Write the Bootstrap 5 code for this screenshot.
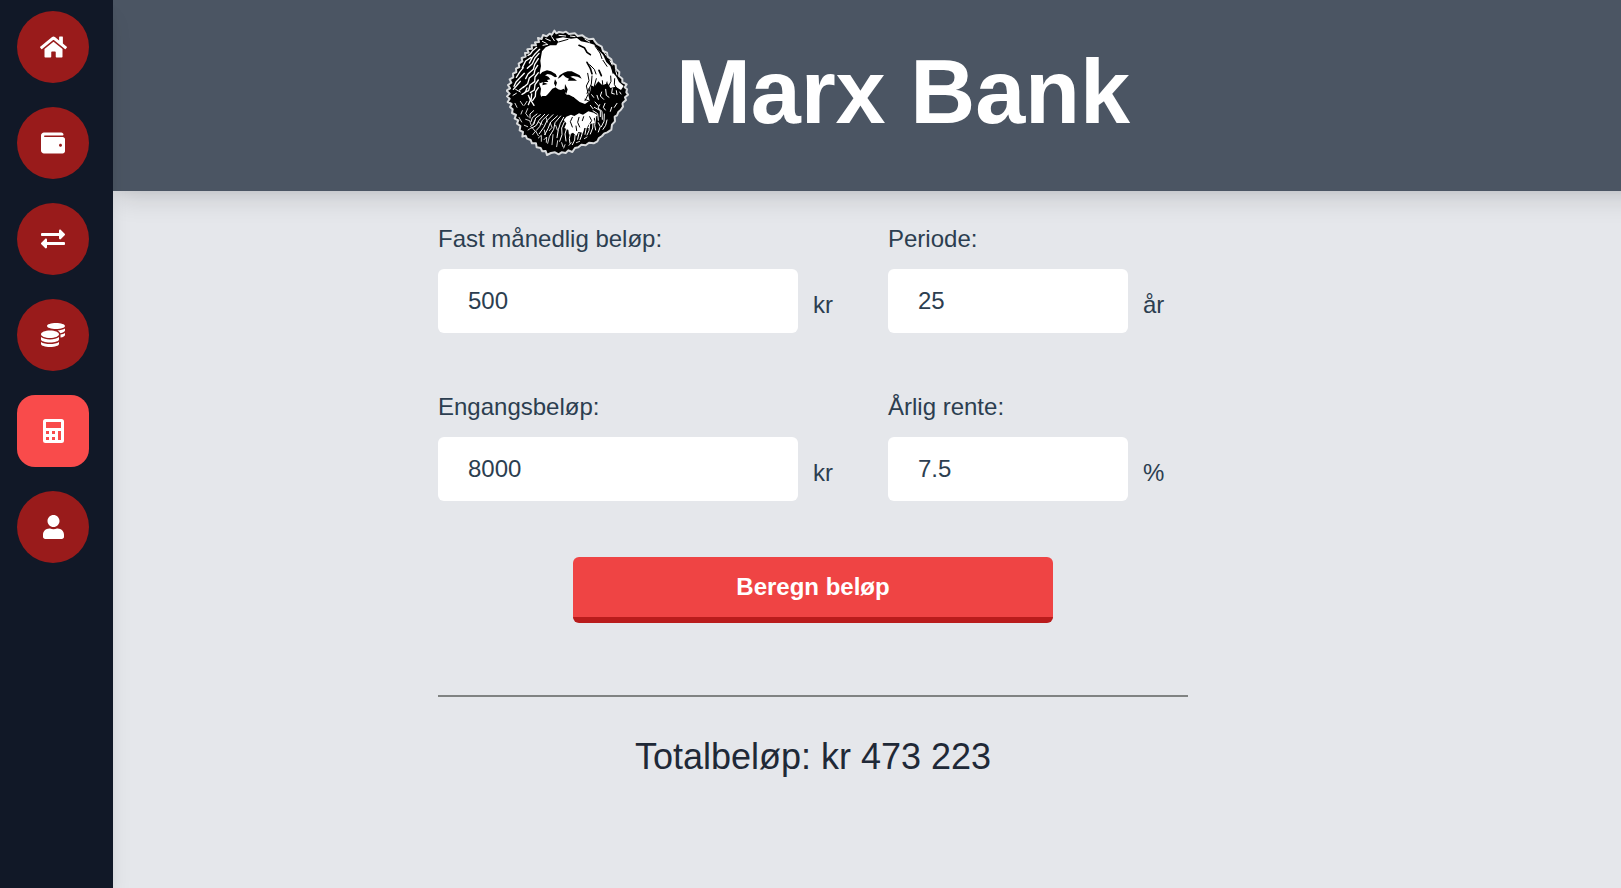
<!DOCTYPE html>
<html lang="no">
<head>
<meta charset="utf-8">
<meta name="viewport" content="width=device-width, initial-scale=1">
<title>Marx Bank</title>
<link href="https://cdn.jsdelivr.net/npm/bootstrap@5.3.0/dist/css/bootstrap.min.css" rel="stylesheet">
<style>
  body { font-family: "Liberation Sans", Arial, sans-serif; font-size: 24px; line-height: 36px; color: #2c3e50; background: #e5e7eb; }
  .sidebar { width: 113px; background: #111827; padding: 11px 24px 0 17px; gap: 24px; z-index: 2; }
  .lifted { box-shadow: 0 15px 22.5px -4.5px rgba(0,0,0,.1), 0 6px 9px -3px rgba(0,0,0,.05); }
  .side-btn { width: 72px; height: 72px; background: #991b1b; color: #fff; }
  .side-btn.active { background: #f94b4b; border-radius: 18px; }
  .side-btn svg { height: 24px; fill: currentColor; }
  .topbar { height: 191px; background: #4b5563; padding-left: 393px; margin-right: -40px; gap: 47px; }
  .topbar h1 { font-size: 90px; line-height: 90px; font-weight: 700; color: #fff; letter-spacing: -.15px; }
  .logo { width: 123px; height: 128px; margin-top: 29px; }
  .brand-name { margin-top: 47px; }
  .calc { width: 750px; margin-left: 325px; padding-top: 30px; }
  .calc-grid { display: grid; grid-template-columns: 450px 300px; row-gap: 50px; }
  .calc label { line-height: 36px; margin-bottom: 12px; }
  .calc .form-control { height: 64px; border: 0; border-radius: 6px; padding: 0 30px; font-size: 24px; color: #2c3e50; }
  .w-amount { width: 360px; } .w-term { width: 240px; }
  .unit { padding: 18px 0 0 15px; }
  .field-row { height: 70px; }
  .btn-calc { width: 480px; height: 66px; background: #ef4444; color: #fff; font-size: 24px; font-weight: 700; border: 0; border-bottom: 6px solid #b91c1c; border-radius: 6px; padding: 0; margin-top: 50px; }
  .btn-calc:hover { background: #dc2626; color: #fff; }
  .rule { height: 2px; background: #808382; margin-top: 72px; }
  .total { font-size: 36px; line-height: 54px; color: #1f2937; margin-top: 33px; }
</style>
</head>
<body>
<div class="d-flex vh-100 overflow-hidden">
  <nav class="sidebar lifted position-relative d-flex flex-column flex-shrink-0">
    <a href="#" aria-label="Hjem" class="side-btn rounded-circle d-flex align-items-center justify-content-center flex-shrink-0"><svg viewBox="0 0 576 512"><path d="M280.37 148.26L96 300.11V464a16 16 0 0 0 16 16l112.06-.29a16 16 0 0 0 15.92-16V368a16 16 0 0 1 16-16h64a16 16 0 0 1 16 16v95.64a16 16 0 0 0 16 16.05L464 480a16 16 0 0 0 16-16V300L295.67 148.26a12.19 12.19 0 0 0-15.3 0zM571.6 251.47L488 182.56V44.05a12 12 0 0 0-12-12h-56a12 12 0 0 0-12 12v72.61L318.47 43a48 48 0 0 0-61 0L4.34 251.47a12 12 0 0 0-1.6 16.9l25.5 31A12 12 0 0 0 45.15 301l235.22-193.74a12.19 12.19 0 0 1 15.3 0L530.9 301a12 12 0 0 0 16.9-1.6l25.5-31a12 12 0 0 0-1.7-16.93z"/></svg></a>
    <a href="#" aria-label="Lommebok" class="side-btn rounded-circle d-flex align-items-center justify-content-center flex-shrink-0"><svg viewBox="0 0 512 512"><path d="M461.2 128H80c-8.84 0-16-7.16-16-16s7.16-16 16-16h384c8.84 0 16-7.16 16-16 0-26.51-21.49-48-48-48H64C28.65 32 0 60.65 0 96v320c0 35.35 28.65 64 64 64h397.2c28.02 0 50.8-21.53 50.8-48V176c0-26.47-22.78-48-50.8-48zM416 336c-17.67 0-32-14.33-32-32s14.33-32 32-32 32 14.33 32 32-14.33 32-32 32z"/></svg></a>
    <a href="#" aria-label="Overfør" class="side-btn rounded-circle d-flex align-items-center justify-content-center flex-shrink-0"><svg viewBox="0 0 512 512"><path d="M0 168v-16c0-13.255 10.745-24 24-24h360V80c0-21.367 25.899-32.042 40.971-16.971l80 80c9.372 9.373 9.372 24.569 0 33.941l-80 80C409.956 271.982 384 261.456 384 240v-48H24c-13.255 0-24-10.745-24-24zm488 152H128v-48c0-21.314-25.862-32.08-40.971-16.971l-80 80c-9.372 9.373-9.372 24.569 0 33.941l80 80C102.057 463.997 128 453.437 128 432v-48h360c13.255 0 24-10.745 24-24v-16c0-13.255-10.745-24-24-24z"/></svg></a>
    <a href="#" aria-label="Sparing" class="side-btn rounded-circle d-flex align-items-center justify-content-center flex-shrink-0"><svg viewBox="0 0 512 512"><path d="M0 405.3V448c0 35.3 86 64 192 64s192-28.7 192-64v-42.7C342.7 434.4 267.2 448 192 448S41.3 434.4 0 405.3zM320 128c106 0 192-28.7 192-64S426 0 320 0 128 28.7 128 64s86 64 192 64zM0 300.4V352c0 35.3 86 64 192 64s192-28.7 192-64v-51.6c-41.3 34-116.9 51.6-192 51.6S41.3 334.4 0 300.4zm416 11c57.3-11.1 96-31.7 96-55.4v-42.7c-23.2 16.4-57.3 27.6-96 34.5v63.6zM192 160C86 160 0 195.8 0 240s86 80 192 80 192-35.8 192-80-86-80-192-80zm219.3 56.3c60-10.8 100.7-32 100.7-56.3v-42.7c-35.5 25.1-96.5 38.6-160.7 41.8 29.5 14.3 51.2 33.5 60 57.2z"/></svg></a>
    <a href="#" aria-label="Kalkulator" class="side-btn active d-flex align-items-center justify-content-center flex-shrink-0"><svg viewBox="0 0 21 24"><path fill-rule="evenodd" d="M2.5 0h16A2.5 2.5 0 0 1 21 2.5v19a2.5 2.5 0 0 1-2.5 2.5h-16A2.5 2.5 0 0 1 0 21.5v-19A2.5 2.5 0 0 1 2.5 0zM3 3v6h15V3zM3 12v3h3v-3zM9 12v3h3v-3zM15 12v9h3v-9zM3 18v3h3v-3zM9 18v3h3v-3z"/></svg></a>
    <a href="#" aria-label="Profil" class="side-btn rounded-circle d-flex align-items-center justify-content-center flex-shrink-0"><svg viewBox="0 0 448 512"><path d="M224 256c70.7 0 128-57.3 128-128S294.7 0 224 0 96 57.3 96 128s57.3 128 128 128zm89.6 32h-16.7c-22.2 10.2-46.9 16-72.9 16s-50.6-5.8-72.9-16h-16.7C60.2 288 0 348.2 0 422.4V464c0 26.5 21.5 48 48 48h352c26.5 0 48-21.5 48-48v-41.6c0-74.2-60.2-134.4-134.4-134.4z"/></svg></a>
  </nav>
  <div class="flex-grow-1">
    <header class="topbar lifted d-flex align-items-start">
      <svg class="logo flex-shrink-0" viewBox="33 27 369 384" role="img" aria-label="Karl Marx" stroke-linejoin="round" stroke-linecap="round">
        <!-- silhouette -->
        <path fill="#000" stroke="#d9dbdd" stroke-width="6" d="M178 32L184 40 192 36 205 38 213 35 222 42 240 40 248 48 262 46 270 52 282 58 295 56 300 65 306 72 320 80 324 93 336 98 338 110 349 118 352 129 362 135 363 147 373 156 372 168 382 176 382 186 395 193 389 202 396 208 394 217 399 224 390 232 393 240 382 250 384 260 377 270 370 276 366 286 359 290 360 304 351 314 349 329 337 337 328 340 321 348 312 354 307 364 296 370 282 368 272 376 259 374 250 382 240 384 232 396 220 391 212 399 200 397 191 403 180 397 168 399 156 405 152 393 142 394 137 384 125 382 123 370 111 370 107 360 96 356 92 347 82 350 84 336 74 331 76 318 66 311 70 301 59 296 63 285 51 279 53 268 45 261 50 252 38 246 44 236 36 229 44 221 35 212 45 205 39 195 49 188 44 178 55 172 54 161 64 156 63 146 73 141 71 131 82 124 80 114 92 110 90 99 101 98 97 88 111 86 110 76 123 76 120 67 132 66 129 54 140 57 144 45 155 49 164 41 170 45z"/>
        <!-- lit face, forehead and right-hand hair -->
        <path fill="#fff" d="M141 94L152 82 166 76 184 76 190 65 182 56 204 52 228 56 246 54 258 64 280 68 298 74 312 92 324 104 334 126 346 138 352 156 364 170 372 186 386 198 378 210 362 200 346 204 338 190 322 196 310 184 298 200 288 196 286 214 280 226 284 242 270 252 254 246 236 232 218 228 208 216 196 218 188 206 172 208 166 218 156 226 140 236 136 222 138 206 133 192 137 176 134 158 138 138 136 122z"/>
        <!-- lit part of the beard -->
        <path fill="#fff" d="M214 290L228 284 238 288 252 280 264 284 280 274 296 278 308 286 296 296 300 308 286 312 282 324 268 324 264 338 250 336 244 348 234 338 222 344 220 330 208 324 214 310 206 300z"/>
        <!-- brows, eyes, nose and moustache -->
        <g fill="#000">
          <path d="M134 164L142 156 156 151 168 154 182 162 186 170 180 172 168 164 158 162 150 166 160 170 166 178 156 180 160 186 146 186 134 190z"/>
          <path d="M188 176L194 166 206 158 218 154 230 154 242 160 254 166 260 176 248 170 234 168 226 170 238 176 246 182 230 182 218 182 222 176 212 172 204 164 196 172z"/>
          <path d="M164 216L172 206 182 202 188 208 198 210 206 206 214 214 208 224 222 224 236 232 246 244 258 254 264 268 272 276 254 274 244 280 232 274 216 276 206 284 194 276 180 280 168 274 154 280 144 272 128 278 116 266 122 252 130 236 142 228 154 228z"/>
          <path d="M180 178L186 188 182 200 177 190zM210 192L218 208 214 222 209 208zM144 186L158 192 142 196z"/>
          <path d="M340 238L356 226 372 232 388 222 380 248 370 268 356 288 342 298 336 278 326 264z"/>
        </g>
        <!-- dark locks over the lit hair -->
        <g fill="none" stroke="#000">
          <path stroke-width="5" d="M252 76l16 7 8 14 10 7M276 127l10 18 5 16M312 151l7 16"/>
          <path stroke-width="3" d="M284 134l14 14 5 14M278 160l4 22-8 16 6 24-10 20M291 168l-2 24-13 28M304 176l-6 22 8 17-10 18M322 182l2 20-9 16 6 18M336 186l-3 18 7 16M347 168l1 16-7 14M359 176l-1 17 8 14M300 78l15 21 6 17M324 121l12 18M352 140l2 20M219 58l-28 8M284 290l6 12-12 20M252 292l-4 15 6 14M232 292l-6 13 6 16M266 290l-4 12M243 318l2 14M270 238l14 6 10-10M282 206l6 19M296 236l12-18 14 2M290 252l14-6 16-6"/>
        </g>
        <!-- white strands through the dark hair and beard -->
        <g fill="none" stroke="#fff">
          <path stroke-width="4" d="M125 82l-12 10-7 10-7 4M134 88l-14 14-8 10-9 17M132 100l-12 14-8 17-15 14M130 116l-11 17-4 15-16 14-7 14M128 136l-8 13-3 14-14 11-5 17-14 12M130 158l-10 13-1 14-14 10-4 17-12 5M130 180l-10 14-2 16-12 8M130 203l-8 12-1 14-8 12M108 112l-16 11-10 20M85 143l-10 12-11 17M88 160l-10 10-15 16-6 13M76 184l-12 14-9 10M86 200l-12 10M96 204l-5 13-10 6M100 226l6 14-6 14M110 222l-2 20 9 14"/>
          <path stroke-width="3" d="M116 272l-11 10 0 12M126 282l-14 11-4 12M136 284l-14 10-5 18-10 7M149 283l-17 18-8 15-13 8M160 284l-18 17-8 19-10 11M174 284l-18 18-9 19-14 20M187 288l-20 18-8 20-10 18M197 288l-17 20-4 20-12 20M206 292l-10 18-6 19-4 24M208 306l-8 18 1 20-7 20M214 328l-4 14 3 21M226 342l-3 14 2 14M240 346l-1 14-7 14M252 340l-4 18M264 330l-5 19-4 10M274 322l-4 21M284 312l-2 20-6 13M294 304l-1 20-7 18M302 292l-3 24 3 14M294 272l14 9 2 20M298 262l18 10 0 18M314 254l-5 10 12 10 1 24M300 246l10 11M330 250l-5 12 6 8M328 282l-1 22-8 16M336 300l-4 16-8 12M310 308l6 12-6 16M286 256l8 10"/>
          <path stroke-width="2.5" d="M98 266l-6 14 8 11M92 298l12 4 4 12M99 330l12-8 8 10M113 344l9-11 8 14M130 354l9-8 0 18M147 359l8-8-1 16M163 350l-5 20M174 344l-3 30M188 362l-3 18M200 368l4 12M154 294l3 12M166 310l5 12-8 10M148 330l3 14M182 316l5 14M131 307l11 6M120 300l-6 12M210 374l-4 10M222 376l7-8M244 368l10-4M268 356l8-5M72 292l8 14M60 250l6 12M98 320l-10-4M76 244l8 12M82 272l-4 10M96 244l-8 12"/>
          <path stroke-width="3" d="M320 216l-4 12 10 10M332 208l2 18 8 6M306 226l4 12M352 206l-2 14 8 2M364 212l2 12M290 224l6 8M374 216l4 6M366 250l-8 12M350 262l-4 12M324 92l9 14M345 122l7 13M362 152l4 13M142 64l12 6M152 56l14 6M144 76l14-3M170 50l8 12M192 46l20 2M226 48l14 2M62 208l14 8M54 226l10-6M270 58l14 8"/>
        </g>
      </svg>
      <h1 class="brand-name mb-0">Marx Bank</h1>
    </header>
    <main class="calc">
      <form onsubmit="return false">
        <div class="calc-grid">
          <div>
            <label class="d-block" for="monthly">Fast månedlig beløp:</label>
            <div class="field-row d-flex"><input id="monthly" class="form-control w-amount" value="500"><span class="unit">kr</span></div>
          </div>
          <div>
            <label class="d-block" for="period">Periode:</label>
            <div class="field-row d-flex"><input id="period" class="form-control w-term" value="25"><span class="unit">år</span></div>
          </div>
          <div>
            <label class="d-block" for="lump">Engangsbeløp:</label>
            <div class="field-row d-flex"><input id="lump" class="form-control w-amount" value="8000"><span class="unit">kr</span></div>
          </div>
          <div>
            <label class="d-block" for="rate">Årlig rente:</label>
            <div class="field-row d-flex"><input id="rate" class="form-control w-term" value="7.5"><span class="unit">%</span></div>
          </div>
        </div>
        <button class="btn btn-calc d-block mx-auto">Beregn beløp</button>
      </form>
      <div class="rule"></div>
      <div class="total text-center">Totalbeløp: kr 473 223</div>
    </main>
  </div>
</div>
<script src="https://cdn.jsdelivr.net/npm/bootstrap@5.3.0/dist/js/bootstrap.bundle.min.js"></script>
</body>
</html>
